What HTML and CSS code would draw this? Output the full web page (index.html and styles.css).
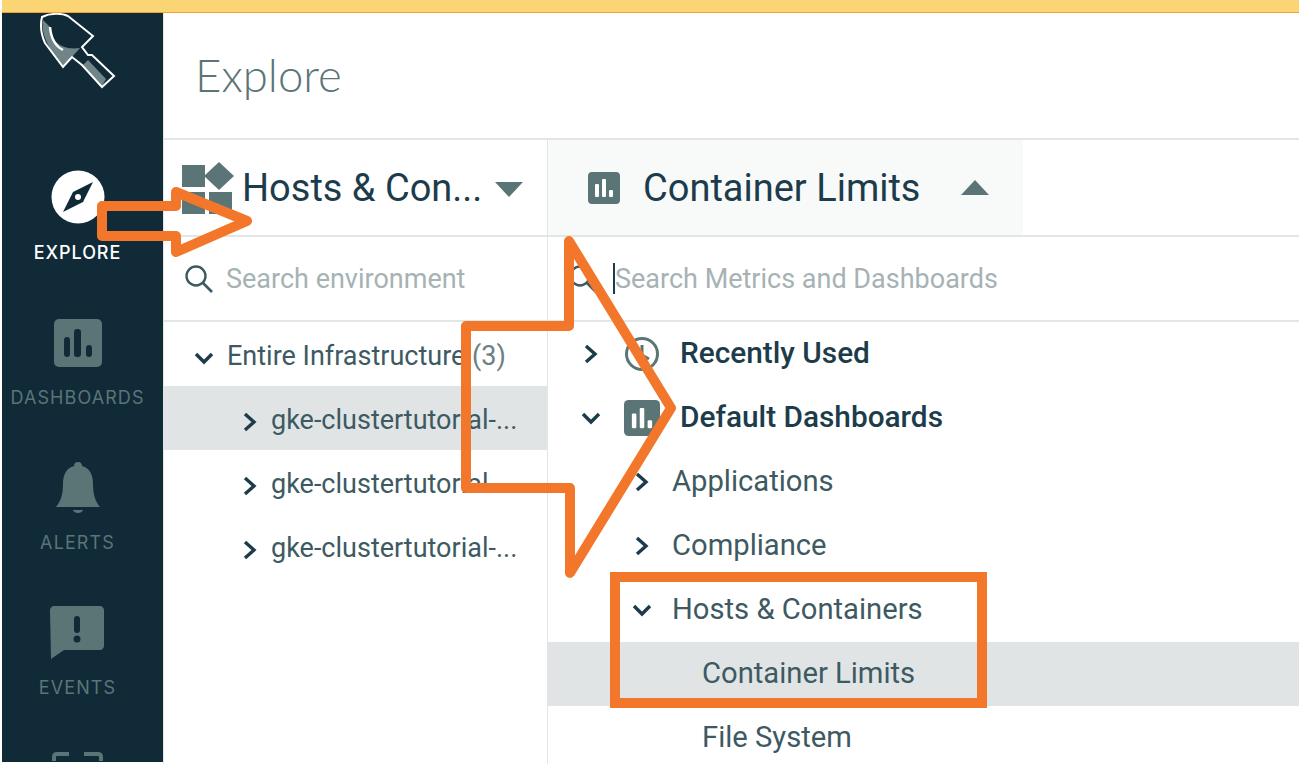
FILE: index.html
```html
<!DOCTYPE html>
<html lang="en">
<head>
    <meta charset="UTF-8">
    <meta name="viewport" content="width=device-width, initial-scale=1.0">
    <title>Explore</title>
    <link rel="stylesheet" href="styles.css">
</head>
<body>

<div class="topbar"></div>

<div class="main">
    <nav class="sidebar">
        <svg class="logo" viewBox="36 12 84 80">
            <path d="M43 20 C41 30 45 45 63 67 L72 57 L80 48 C65 50 52 45 50 27Z" fill="#6f8587"/>
            <path d="M88 60 L106 79 L102 86 L83 65Z" fill="#6f8587"/>
            <path d="M42 17 C50 13 62 13 68 16 L93 36 L82 47 L88 55 L92 55 L114 76 L102 87 L82 65 L72 57 L63 67 L45 43 C41 34 40 25 42 17Z" fill="none" stroke="#fff" stroke-width="2"/>
            <path d="M50 27 C51 38 55 46 63 50" fill="none" stroke="#fff" stroke-width="2.5"/>
        </svg>

        <a class="nav-item active">
            <svg class="nav-icon" viewBox="0 0 54 54">
                <circle cx="27" cy="27" r="26.5" fill="#fff"/>
                <path d="M42 12 L32 32 L12 42 L22 22Z" fill="#112a38"/>
                <circle cx="27" cy="27" r="3" fill="#fff"/>
            </svg>
            <span>EXPLORE</span>
        </a>
        <a class="nav-item">
            <svg class="nav-icon" viewBox="0 0 54 54">
                <rect x="3" y="3" width="48" height="48" rx="5" fill="#5b7577"/>
                <rect x="13" y="21" width="6" height="20" rx="3" fill="#112a38"/>
                <rect x="23" y="13" width="7" height="28" rx="3" fill="#112a38"/>
                <rect x="35" y="29" width="6" height="12" rx="3" fill="#112a38"/>
            </svg>
            <span>DASHBOARDS</span>
        </a>
        <a class="nav-item">
            <svg class="nav-icon" viewBox="0 0 54 54">
                <path d="M27 1 C30 1 31 3 31 5 C39 7 42 14 42 23 C42 33 44 40 49 46 L5 46 C10 40 12 33 12 23 C12 14 15 7 23 5 C23 3 24 1 27 1Z" fill="#5b7577"/>
                <path d="M22 49 L32 49 C31 53 23 53 22 49Z" fill="#5b7577"/>
            </svg>
            <span>ALERTS</span>
        </a>
        <a class="nav-item">
            <svg class="nav-icon" viewBox="0 0 54 54">
                <path d="M4 0 L50 0 C52 0 54 2 54 4 L54 40 C54 42 52 44 50 44 L14 44 L1 53 L0 4 C0 2 2 0 4 0Z" fill="#5b7577"/>
                <rect x="24" y="10" width="6" height="17" rx="3" fill="#112a38"/>
                <circle cx="27" cy="33" r="3.5" fill="#112a38"/>
            </svg>
            <span>EVENTS</span>
        </a>
        <a class="nav-item">
            <svg class="nav-icon" viewBox="0 0 54 54">
                <path d="M3 10 L3 6 C3 4 4 3 6 3 L18 3 M33 3 L47 3 C49 3 50 4 50 6 L50 10" fill="none" stroke="#5b7577" stroke-width="4"/>
            </svg>
        </a>
    </nav>

    <div class="content">
        <h1 class="page-title">Explore</h1>

        <div class="columns">
            <section class="col col-left">
                <div class="col-head">
                    <svg class="env-icon" viewBox="0 0 53 52">
                        <rect x="1" y="3" width="23" height="22" fill="#5b7577"/>
                        <path d="M38 0 L53 14 L38 28 L23 14Z" fill="#5b7577"/>
                        <rect x="1" y="30" width="23" height="22" fill="#5b7577"/>
                        <rect x="28" y="30" width="23" height="22" fill="#5b7577"/>
                    </svg>
                    <span class="head-text">Hosts &amp; Con...</span>
                    <svg class="caret" viewBox="0 0 28 15"><path d="M0 0 L28 0 L14 15Z" fill="#5b7577"/></svg>
                </div>
                <div class="search">
                    <svg class="mag" viewBox="0 0 30 30"><circle cx="12" cy="12" r="9.5" fill="none" stroke="#3d5a63" stroke-width="2.4"/><path d="M19 19 L28 28" stroke="#3d5a63" stroke-width="2.6"/></svg>
                    <span class="placeholder">Search environment</span>
                </div>
                <ul class="tree">
                    <li class="row env-root">
                        <svg class="chev" viewBox="0 0 20 20"><path d="M2 6 L10 14 L18 6" /></svg>
                        <span>Entire Infrastructure <span class="count">(3)</span></span>
                    </li>
                    <li class="row env-host selected">
                        <svg class="chev" viewBox="0 0 20 20"><path d="M5 2 L14 10 L5 18" /></svg>
                        <span>gke-clustertutorial-...</span>
                    </li>
                    <li class="row env-host">
                        <svg class="chev" viewBox="0 0 20 20"><path d="M5 2 L14 10 L5 18" /></svg>
                        <span>gke-clustertutorial-...</span>
                    </li>
                    <li class="row env-host">
                        <svg class="chev" viewBox="0 0 20 20"><path d="M5 2 L14 10 L5 18" /></svg>
                        <span>gke-clustertutorial-...</span>
                    </li>
                </ul>
            </section>

            <section class="col col-right">
                <div class="col-head">
                    <div class="tab">
                        <svg class="tab-icon" viewBox="0 0 32 32">
                            <rect width="32" height="32" rx="4" fill="#5b7577"/>
                            <rect x="7" y="12" width="4" height="13" rx="1" fill="#fff"/>
                            <rect x="14" y="7" width="4" height="18" rx="1" fill="#fff"/>
                            <rect x="21" y="18" width="4" height="7" rx="1" fill="#fff"/>
                        </svg>
                        <span class="head-text">Container Limits</span>
                        <svg class="caret" viewBox="0 0 28 15"><path d="M0 15 L28 15 L14 0Z" fill="#5b7577"/></svg>
                    </div>
                </div>
                <div class="search">
                    <svg class="mag" viewBox="0 0 30 30"><circle cx="12" cy="12" r="9.5" fill="none" stroke="#3d5a63" stroke-width="2.4"/><path d="M19 19 L28 28" stroke="#3d5a63" stroke-width="2.6"/></svg>
                    <span class="text-cursor"></span>
                    <span class="placeholder">Search Metrics and Dashboards</span>
                </div>
                <ul class="tree">
                    <li class="row group">
                        <svg class="chev" viewBox="0 0 20 20"><path d="M5 2 L14 10 L5 18" /></svg>
                        <svg class="row-icon" viewBox="0 0 36 36"><circle cx="18" cy="18" r="15.5" fill="none" stroke="#5b7577" stroke-width="3"/><path d="M18 9 L18 19 L25 23" fill="none" stroke="#5b7577" stroke-width="3"/></svg>
                        <strong>Recently Used</strong>
                    </li>
                    <li class="row group">
                        <svg class="chev" viewBox="0 0 20 20"><path d="M2 6 L10 14 L18 6" /></svg>
                        <svg class="row-icon" viewBox="0 0 32 32">
                            <rect width="32" height="32" rx="4" fill="#5b7577"/>
                            <rect x="7" y="12" width="4" height="13" rx="1" fill="#fff"/>
                            <rect x="14" y="7" width="4" height="18" rx="1" fill="#fff"/>
                            <rect x="21" y="18" width="4" height="7" rx="1" fill="#fff"/>
                        </svg>
                        <strong>Default Dashboards</strong>
                    </li>
                    <li class="row folder">
                        <svg class="chev" viewBox="0 0 20 20"><path d="M5 2 L14 10 L5 18" /></svg>
                        <span>Applications</span>
                    </li>
                    <li class="row folder">
                        <svg class="chev" viewBox="0 0 20 20"><path d="M5 2 L14 10 L5 18" /></svg>
                        <span>Compliance</span>
                    </li>
                    <li class="row folder">
                        <svg class="chev" viewBox="0 0 20 20"><path d="M2 6 L10 14 L18 6" /></svg>
                        <span>Hosts &amp; Containers</span>
                    </li>
                    <li class="row leaf selected"><span>Container Limits</span></li>
                    <li class="row leaf"><span>File System</span></li>
                </ul>
            </section>
        </div>
    </div>
</div>

<!-- orange annotations drawn over the screenshot -->
<svg class="marks" viewBox="0 0 1299 764">
    <path d="M102 206 L176 206 L176 192 L247 221 L176 252 L176 236 L102 236Z" />
    <path d="M569 241 L569 326 L466 326 L466 488 L570 488 L570 573 L671 408Z" />
    <rect x="615" y="577" width="367" height="126" />
</svg>

</body>
</html>
```

FILE: styles.css
```css
body {
    font-family: Roboto, "Liberation Sans", sans-serif;
    background-color: #fff;
    color: #1d3c4b;
    margin: 0;
    height: 764px;
    overflow: hidden;
    display: flex;
    flex-direction: column;
}

.topbar {
    height: 12px;
    margin-left: 2px;
    flex: none;
    background-color: #fbd573;
    border-bottom: 1px solid #f2a03c;
}

.main {
    display: flex;
    flex: 1;
    min-height: 0;
}

/* left nav */
.sidebar {
    width: 161px;
    box-sizing: border-box;
    padding-right: 10px;
    margin-left: 2px;
    margin-bottom: 2px;
    flex: none;
    overflow: hidden;
    background-color: #112a38;
    display: flex;
    flex-direction: column;
    align-items: center;
}

.logo {
    width: 84px;
    height: 80px;
    margin-top: -1px;
    margin-bottom: 70px;
    flex: none;
}

.nav-item {
    height: 145px;
    flex: none;
    display: flex;
    flex-direction: column;
    align-items: center;
    color: #5b7577;
    font-family: Inter, "Open Sans", sans-serif;
    font-size: 18px;
    letter-spacing: 1.1px;
}

.nav-item.active {
    color: #fff;
    font-weight: 500;
    letter-spacing: 0.9px;
}

.nav-icon {
    width: 54px;
    height: 54px;
    margin-top: 9px;
    margin-bottom: 17px;
}

.nav-item.active .nav-icon {
    margin-top: 8px;
    margin-bottom: 18px;
}

/* content */
.content {
    flex: 1;
    min-width: 0;
    display: flex;
    flex-direction: column;
    border-left: 1px solid #e3e6e7;
}

.page-title {
    height: 127px;
    margin: 0;
    padding: 0 0 0 31px;
    box-sizing: border-box;
    font-family: Lato, "Open Sans", sans-serif;
    font-size: 45.5px;
    line-height: 124px;
    font-weight: 300;
    color: #5b7577;
    border-bottom: 2px solid #e3e6e7;
}

.columns {
    flex: 1;
    display: flex;
    min-height: 0;
}

.col-left {
    width: 383px;
    flex: none;
    border-right: 1px solid #e3e6e7;
}

.col-right {
    flex: 1;
    min-width: 0;
}

.col-head {
    height: 95px;
    display: flex;
    align-items: center;
    border-bottom: 2px solid #e3e6e7;
    font-size: 38px;
}

.col-left .col-head {
    padding-left: 17px;
}

.env-icon {
    width: 53px;
    height: 52px;
    margin-right: 8px;
}

.caret {
    width: 28px;
    height: 15px;
}

.col-left .caret {
    margin-left: 13px;
    margin-top: 3px;
}

.tab {
    width: 475px;
    height: 95px;
    box-sizing: border-box;
    padding-left: 40px;
    display: flex;
    align-items: center;
    background-color: #f8f9f9;
}

.tab-icon {
    width: 32px;
    height: 32px;
    margin-right: 23px;
}

.tab .caret {
    margin-left: 40px;
}

.head-text {
    white-space: nowrap;
}

.search {
    height: 83px;
    display: flex;
    align-items: center;
    border-bottom: 2px solid #e3e6e7;
    font-size: 27px;
    position: relative;
}

.col-left .search {
    padding-left: 20px;
}

.col-right .search {
    padding-left: 20px;
}

.mag {
    width: 30px;
    height: 30px;
    margin-right: 12px;
    flex: none;
}

.col-right .mag {
    margin-right: 15px;
}

.text-cursor {
    width: 2px;
    height: 31px;
    background-color: #1d3c4b;
}

.placeholder {
    color: #a6b2b4;
    white-space: nowrap;
}

/* trees */
.tree {
    list-style: none;
    margin: 0;
    padding: 0;
}

.row {
    height: 64px;
    box-sizing: border-box;
    display: flex;
    align-items: center;
    font-size: 29.2px;
    color: #3d5a63;
    white-space: nowrap;
}

.row > span,
.row > strong {
    margin-top: -3px;
}

.row.selected {
    background-color: #e1e4e5;
}

.chev {
    width: 20px;
    height: 20px;
    flex: none;
    fill: none;
    stroke: #1d3c4b;
    stroke-width: 3.4;
}

.count {
    color: #6b8083;
}

.col-left .row {
    padding-top: 6px;
    font-size: 27px;
}

.col-left .chev {
    margin-top: 1px;
}

.env-root {
    padding-left: 30px;
}

.env-root .chev {
    margin-right: 13px;
}

.env-host {
    padding-left: 76px;
    color: #3d5a63;
}

.env-host .chev {
    margin-right: 11px;
}

.group {
    padding-left: 33px;
    font-size: 29.8px;
    color: #1d3c4b;
}

.group strong {
    font-weight: 500;
}

.group .chev {
    margin-right: 23px;
}

.row-icon {
    width: 36px;
    height: 36px;
    margin-right: 20px;
    flex: none;
}

.folder {
    padding-left: 84px;
}

.folder .chev {
    margin-right: 20px;
}

.leaf {
    padding-left: 154px;
}

/* annotations */
.marks {
    position: absolute;
    left: 0;
    top: 0;
    width: 1299px;
    height: 764px;
    fill: none;
    stroke: #f3772b;
    stroke-width: 10;
    stroke-linejoin: round;
    pointer-events: none;
}

.marks rect {
    stroke-linejoin: miter;
}
```
